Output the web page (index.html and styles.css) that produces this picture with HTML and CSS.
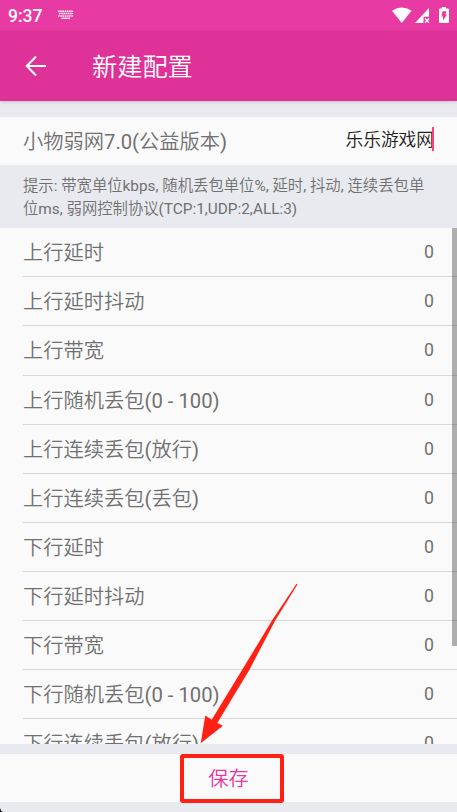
FILE: index.html
```
<!DOCTYPE html>
<html lang="zh-CN">
<head>
<meta charset="utf-8">
<title>新建配置</title>
<link rel="stylesheet" href="styles.css">
</head>
<body>
<div class="screen">
  <div class="status">
    <span class="clock">9:37</span>
    <svg class="keyboard" width="16" height="10" viewBox="0 0 16 10" stroke="#fff" fill="none">
      <path d="M0 1.2H15.5M1 3.6H15" stroke-width="1.5" stroke-dasharray="1.6 .6"/>
      <path d="M0 6H15.5" stroke-width="1.5" stroke-dasharray="1.6 .6"/>
      <path d="M3.5 8.3H12" stroke-width="1.2"/>
    </svg>
    <svg class="signals" width="60" height="18" viewBox="0 0 60 18">
      <path fill="#fff" d="M0 3.7Q9.5-2.5 19.5 3.7L9.8 16Z"/>
      <path fill="#fff" d="M37 1V9.7H31.5V16H23Z"/>
      <path stroke="#fff" stroke-width="1.3" d="M33 11.5L37 15.7M37 11.5L33 15.7"/>
      <path fill="#fff" d="M49.7 0H54V1.5H56Q57 1.5 57 2.5V15Q57 16 56 16H48Q47 16 47 15V2.5Q47 1.5 48 1.5H49.7Z"/>
      <path fill="#e73ba3" d="M50.5 4.2H54.5L53.5 7.5H55L51 13.5V9.5H49.5Z"/>
    </svg>
  </div>
  <header class="appbar">
    <svg class="back" width="22" height="22" viewBox="0 0 22 22" fill="none" stroke="#fff" stroke-width="2.1">
      <path d="M11 1.5L1.8 11L11 20.5M2 11H21"/>
    </svg>
    <h1>新建配置</h1>
  </header>
  <div class="row name">
    <span>小物弱网<b>7.0(</b>公益版本<b>)</b></span>
    <span class="input">乐乐游戏网<i class="caret"></i></span>
  </div>
  <p class="hint">提示<b>: </b>带宽单位<b>kbps, </b>随机丢包单位<b>%, </b>延时<b>, </b>抖动<b>, </b>连续丢包单<br>位<b>ms, </b>弱网控制协议<b>(TCP:1,UDP:2,ALL:3)</b></p>
  <main class="list">
    <div class="row"><span>上行延时</span><span class="value">0</span></div>
    <div class="row"><span>上行延时抖动</span><span class="value">0</span></div>
    <div class="row"><span>上行带宽</span><span class="value">0</span></div>
    <div class="row"><span>上行随机丢包<b>(0 - 100)</b></span><span class="value">0</span></div>
    <div class="row"><span>上行连续丢包<b>(</b>放行<b>)</b></span><span class="value">0</span></div>
    <div class="row"><span>上行连续丢包<b>(</b>丢包<b>)</b></span><span class="value">0</span></div>
    <div class="row"><span>下行延时</span><span class="value">0</span></div>
    <div class="row"><span>下行延时抖动</span><span class="value">0</span></div>
    <div class="row"><span>下行带宽</span><span class="value">0</span></div>
    <div class="row"><span>下行随机丢包<b>(0 - 100)</b></span><span class="value">0</span></div>
    <div class="row"><span>下行连续丢包<b>(</b>放行<b>)</b></span><span class="value">0</span></div>
    <div class="scrollbar"></div>
  </main>
  <div class="save">保存<div class="highlight"></div></div>
  <svg class="arrow" width="100" height="162" viewBox="0 0 100 162">
    <path fill="#ff2113" d="M96.4 1Q97.6 .4 97.3 1.8L75.5 37L49.3 87L17.3 140L22.9 142.7L.7 160.3L5.3 132.6L11.7 136.7L42 87L72.3 37Z"/>
  </svg>
  <svg class="corner" width="3" height="4" viewBox="0 0 3 4"><path d="M0 0Q.5 3 3 4H0Z"/></svg>
</div>
</body>
</html>
```

FILE: styles.css
```
* { box-sizing: border-box; }
body {
  margin: 0;
  background: #e9eaef;
  color: #707070;
  font-family: Roboto, "Noto Sans CJK SC", sans-serif;
  font-weight: 350;
}
/* Latin runs take the regular cut beside the lighter Chinese one */
b { font-weight: 400; }
.screen {
  position: relative;
  display: flex;
  flex-direction: column;
  width: 457px;
  height: 812px;
  overflow: hidden;
}
.status {
  display: flex;
  flex: none;
  height: 31px;
  padding: 0 10px 0 8px;
  background: #e73ba3;
  color: #fff;
}
.clock {
  width: 50px;
  font-size: 17.5px;
  font-weight: 500;
  line-height: 32px;
}
.keyboard { margin-top: 10px; }
.signals { margin: 7px -5px 0 auto; }
.appbar {
  display: flex;
  flex: none;
  align-items: center;
  height: 70px;
  margin-bottom: 16px;
  padding-left: 25px;
  background: #de3299;
  box-shadow: 0 1px 3px rgba(0, 0, 0, .18);
  color: #fff;
}
h1 {
  margin: 3px 0 0 45px;
  font-size: 25.2px;
  font-weight: 350;
  line-height: 40px;
}
.row {
  display: flex;
  flex: none;
  justify-content: space-between;
  height: 49.1px;
  margin-left: 23px;
  padding-right: 23px;
  border-bottom: 1px solid #d8d8d8;
  font-size: 20.25px;
  line-height: 51px;
  white-space: nowrap;
}
.name {
  height: 48px;
  margin-left: 0;
  padding-left: 23px;
  border: 0;
  background: #fafafa;
}
.input {
  position: relative;
  color: #212121;
  font-size: 17.7px;
  line-height: 47px;
}
.caret {
  position: absolute;
  top: 10px;
  right: 0;
  width: 2px;
  height: 24px;
  background: #ff4081;
}
.hint {
  flex: none;
  height: 63px;
  margin: 0;
  padding: 10px 0 0 23px;
  font-size: 15.35px;
  line-height: 23px;
  white-space: nowrap;
}
.list {
  position: relative;
  flex: none;
  height: 516px;
  overflow: hidden;
  padding-top: .3px;
  background: #fafafa;
}
.value {
  font-size: 17.7px;
  font-weight: 400;
  line-height: 49px;
}
.scrollbar {
  position: absolute;
  top: 0;
  right: 0;
  width: 5px;
  height: 418px;
  background: rgba(0, 0, 0, .3);
}
.save {
  position: relative;
  flex: none;
  height: 48px;
  margin-top: 10px;
  background: #fafafa;
  color: #e6399f;
  font-size: 20.25px;
  line-height: 51px;
  text-align: center;
}
.highlight {
  position: absolute;
  top: 0;
  left: 180px;
  width: 104px;
  height: 49px;
  border: 4px solid #ff2113;
  border-radius: 3px;
}
.arrow {
  position: absolute;
  top: 583px;
  left: 200px;
}
.corner {
  position: absolute;
  bottom: 0;
  left: 0;
}
```
